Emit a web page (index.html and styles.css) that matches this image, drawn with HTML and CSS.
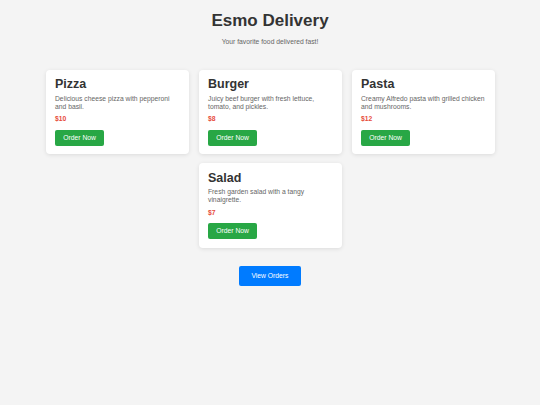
FILE: index.html
```html
<!DOCTYPE html>
<html lang="en">
<head>
<meta charset="utf-8">
<title>Esmo Delivery</title>
<link rel="stylesheet" href="styles.css">
</head>
<body>
<header class="header">
  <h1 class="title">Esmo Delivery</h1>
  <p class="subtitle">Your favorite food delivered fast!</p>
</header>
<main class="menu">
  <div class="card">
    <h2 class="card-title">Pizza</h2>
    <p class="card-desc">Delicious cheese pizza with pepperoni and basil.</p>
    <p class="price">$10</p>
    <button class="order-btn">Order Now</button>
  </div>
  <div class="card">
    <h2 class="card-title">Burger</h2>
    <p class="card-desc">Juicy beef burger with fresh lettuce, tomato, and pickles.</p>
    <p class="price">$8</p>
    <button class="order-btn">Order Now</button>
  </div>
  <div class="card">
    <h2 class="card-title">Pasta</h2>
    <p class="card-desc">Creamy Alfredo pasta with grilled chicken and mushrooms.</p>
    <p class="price">$12</p>
    <button class="order-btn">Order Now</button>
  </div>
  <div class="card">
    <h2 class="card-title">Salad</h2>
    <p class="card-desc">Fresh garden salad with a tangy vinaigrette.</p>
    <p class="price">$7</p>
    <button class="order-btn">Order Now</button>
  </div>
</main>
<div class="actions">
  <button class="view-btn">View Orders</button>
</div>
</body>
</html>
```
FILE: styles.css
```css
html, body {
  margin: 0;
  padding: 0;
}
body {
  background: #f4f4f4;
  font-family: "Liberation Sans", Arial, sans-serif;
  font-size: 6.75px;
  color: #333;
}
.header {
  text-align: center;
  padding-top: 11px;
}
.title {
  margin: 0;
  font-size: 17px;
  font-weight: bold;
  line-height: 19.2px;
  color: #333;
}
.subtitle {
  margin: 7.3px 0 0;
  line-height: 7.67px;
  color: #666;
}
.menu {
  display: flex;
  flex-wrap: wrap;
  justify-content: center;
  gap: 9px 10px;
  margin-top: 24.8px;
}
.card {
  width: 124px;
  padding: 8.5px 9.5px 8.6px;
  background: #fff;
  border-radius: 4px;
  box-shadow: 0 1px 4px rgba(0, 0, 0, 0.1);
}
.card-title {
  margin: 0 0 2.5px;
  font-size: 12.5px;
  line-height: 13.8px;
  font-weight: bold;
  color: #333;
}
.card-desc {
  margin: 0;
  line-height: 8px;
  color: #666;
}
.price {
  margin: 4.5px 0 0;
  line-height: 8px;
  font-weight: bold;
  color: #e74c3c;
}
.order-btn {
  display: block;
  margin-top: 6.3px;
  padding: 4.17px 8.33px;
  border: none;
  border-radius: 2px;
  background: #28a745;
  color: #fff;
  font-family: inherit;
  font-size: 6.75px;
  line-height: 8px;
}
.actions {
  display: flex;
  justify-content: center;
  margin-top: 18px;
}
.view-btn {
  padding: 6.25px 12.5px;
  border: none;
  border-radius: 2px;
  background: #007bff;
  color: #fff;
  font-family: inherit;
  font-size: 6.75px;
  line-height: 8px;
}
```
